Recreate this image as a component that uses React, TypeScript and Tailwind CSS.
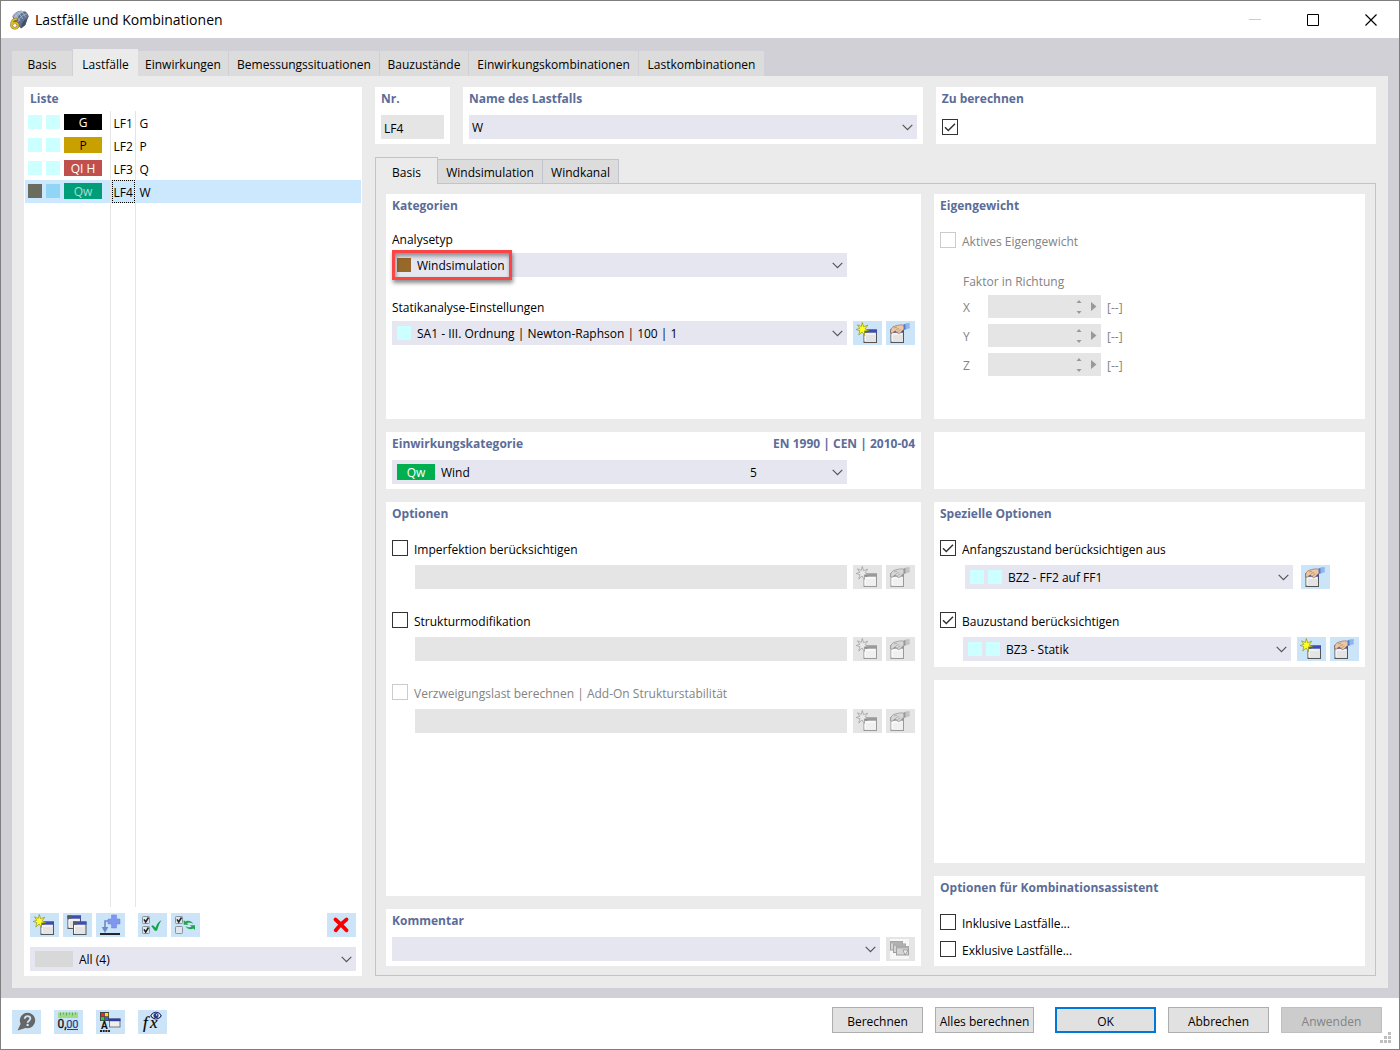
import React from "react";

type Children = { children?: React.ReactNode };

/* ---------- Icons ---------- */

const Glyph: React.FC<Children> = ({ children }) => (
  <svg viewBox="0 0 29 24" width="29" height="24" aria-hidden="true">
    {children}
  </svg>
);

const MiniWindow = ({ x, y, gray = false }: { x: number; y: number; gray?: boolean }) => (
  <g>
    <rect x={x + 0.5} y={y + 0.5} width="12.5" height="12.5" fill={gray ? "#f0f0f0" : "#e4e4e4"} stroke={gray ? "#999" : "#555"} />
    <rect x={x} y={y} width="13.5" height="3.2" fill={gray ? "#999" : "#3f4db0"} />
    <rect x={x} y={y} width="4" height="3.2" fill={gray ? "#888" : "#5a5a62"} />
    <path d={`M${x + 1.5} ${y + 11.5}V${y + 4.5}H${x + 11.5}`} fill="none" stroke="#fff" />
  </g>
);

const NewIcon = ({ gray = false }: { gray?: boolean }) => (
  <Glyph>
    <MiniWindow x={10.5} y={8.5} gray={gray} />
    <path
      d="M9.3 1.500l1.300 4.200 4.200-1.500-2.700 3.600 3.500 1.800-4.200.3.200 4.600-2.500-3.500-3.300 3 1-4.400L3.200 8.500l3.600-1.200L4.500 3.800l3.800 1.700z"
      fill={gray ? "#e8e8e8" : "#ffff1f"}
      stroke={gray ? "#999" : "#8f8f20"}
      strokeWidth=".7"
    />
  </Glyph>
);

const EditIcon = ({ gray = false }: { gray?: boolean }) => (
  <Glyph>
    <MiniWindow x={4.5} y={8.5} gray={gray} />
    <path
      d="M4.600 10.500c0-2.600 1.600-4.600 3.700-5.200 2.600-.9 5.200-1.500 7.800-1.400l2 .5v4.200l-1.900 1c-.8 1.500-1.800 2.500-3.100 2.900-1.100.4-1.900-.4-1.500-1.300-1 .4-1.800-.2-1.700-1.100-1.100.1-2 .4-2.600 1.300-.9 1.300-2.700.600-2.700-.9z"
      fill={gray ? "#d6d6d6" : "#eec7a2"}
      stroke={gray ? "#8f8f8f" : "#8f6f56"}
      strokeWidth=".7"
    />
    <path d="M9.500 9.300c1-1.100 2.200-1.600 3.500-1.600M12 11c.6-1.200 1.400-1.800 2.500-2.100M8 7l3-.9" fill="none" stroke={gray ? "#999" : "#9a7a60"} strokeWidth=".6" />
    <path d="M18.600 3l1.700-.7h3.700l-.5 3.200.6 1.600-2.800.9-2.900.8z" fill={gray ? "#c4c4c4" : "#8fb4ee"} />
    <path d="M17.600 3.500l1.700-.6.300 5.500-1.800.4z" fill={gray ? "#999" : "#4f7cc8"} />
  </Glyph>
);

const CopyIcon = () => (
  <Glyph>
    <MiniWindow x={4.5} y={2.5} />
    <MiniWindow x={10} y={8.5} />
  </Glyph>
);

const InsertIcon = () => (
  <Glyph>
    <path d="M15.5 2h5v4H24v5h-3.500v4h-5v-4h-3.500V6h3.500z" fill="#7f97ee" stroke="#6a80d8" strokeWidth=".5" />
    <path d="M12 8H9v7" fill="none" stroke="#6a8cc8" strokeWidth="1.6" />
    <path d="M5.700 14h6.600L9 20z" fill="#6a8cc8" />
    <path d="M4 21h20" stroke="#111" strokeWidth="1.800" />
  </Glyph>
);

const TickBox = ({ y, ticked }: { y: number; ticked: boolean }) => (
  <g>
    <rect x="4.500" y={y} width="7" height="7" rx=".8" fill="#dfe7ee" stroke="#8a949c" />
    {ticked && <path d={`M6 ${y + 2.8}l1.700 2.700 2.800-4.500`} fill="none" stroke="#222" strokeWidth="1.500" />}
  </g>
);

const CheckAllIcon = () => (
  <Glyph>
    <TickBox y={3.500} ticked />
    <TickBox y={13.500} ticked />
    <path d="M13.200 13l1.800-.8 2.600 2.500c1-3.500 2.800-6 5.900-7.700-2 3.200-3.300 6.500-4.500 10.800h-2.200z" fill="#14a548" />
  </Glyph>
);

const InvertIcon = () => (
  <Glyph>
    <TickBox y={3.500} ticked />
    <TickBox y={13.500} ticked={false} />
    <path d="M12.700 7v4.700h5L16 10.300c1.900-.8 4.500-.6 6.300.8-1.800-3.400-5.700-4-8-2.500z" fill="#23a455" />
    <path d="M24 17v-4.700h-5l1.700 1.400c-1.900.8-4.500.6-6.300-.8 1.800 3.400 5.700 4 8 2.500z" fill="#23a455" />
  </Glyph>
);

const DeleteIcon = () => (
  <Glyph>
    <path d="M8.500 6.500c3.500 3 7 6.500 11 10.800M19.500 6.500c-4 3-8 6.800-10.800 10.800" fill="none" stroke="#f80000" strokeWidth="3.800" strokeLinecap="round" />
  </Glyph>
);

const HelpIcon = () => (
  <Glyph>
    <circle cx="15.500" cy="10.500" r="7.700" fill="#666" />
    <path d="M9 13L5.500 20.500l8-2.500z" fill="#666" />
    <path d="M12.800 8.700c0-3.500 5.700-3.300 5.500 0-.1 2-2.700 2-2.700 4.100" fill="none" stroke="#cde4f8" strokeWidth="1.900" />
    <circle cx="15.600" cy="15" r="1.200" fill="#cde4f8" />
  </Glyph>
);

const UnitsIcon = () => (
  <Glyph>
    <rect x="4" y="2.500" width="20" height="5.500" fill="#9cdc86" />
    <path d="M6.500 2.500v3M9.500 2.500v2M12.500 2.500v3M15.500 2.500v2M18.500 2.500v3M21.500 2.500v2" stroke="#5aa04c" strokeWidth=".8" />
    <text x="3.500" y="18" fontSize="12" fontFamily="Roboto, sans-serif" fill="#111" stroke="#111" strokeWidth=".3">0,</text>
    <text x="12.200" y="18" fontSize="11" fontFamily="Roboto, sans-serif" fill="#27408b" stroke="#27408b" strokeWidth=".2">00</text>
    <path d="M13 19.500h11" stroke="#27408b" />
  </Glyph>
);

const DisplayIcon = () => (
  <Glyph>
    <rect x="4" y="2" width="9" height="9" fill="#444" />
    <path d="M5 3h3.300v3.300H5z" fill="#f22" />
    <path d="M8.900 3h3.300v3.300H8.900z" fill="#ffe600" />
    <path d="M5 6.900h3.300v3.300H5z" fill="#1fd32c" />
    <path d="M8.900 6.900h3.300v3.300H8.900z" fill="#3a58ff" />
    <text x="5" y="19" fontSize="10" fontWeight="bold" fontFamily="Roboto, sans-serif" fill="#111">A</text>
    <path d="M4 21h10" stroke="#222" strokeWidth="2" strokeDasharray="2 .7" />
    <rect x="13.500" y="9" width="10.500" height="8" fill="#eee" stroke="#777" />
    <rect x="13" y="8.500" width="11.500" height="2.700" fill="#2e3f9e" />
  </Glyph>
);

const FormulaIcon = () => (
  <Glyph>
    <text x="5" y="18" fontSize="17" fontStyle="italic" fontFamily="'Liberation Serif', serif" stroke="#111" strokeWidth=".2">f</text>
    <text x="12" y="18" fontSize="17" fontStyle="italic" fontFamily="'Liberation Serif', serif" stroke="#111" strokeWidth=".2">x</text>
    <path d="M12.800 5.800c2.500-4.700 7.900-4.700 10.400 0-2.500 4.200-7.900 4.200-10.400 0z" fill="#fff" stroke="#222a6a" strokeWidth="1.100" />
    <circle cx="18" cy="5.600" r="2.600" fill="#263a8c" />
    <circle cx="18.600" cy="4.900" r=".8" fill="#cde4f8" />
  </Glyph>
);

const CommentsIcon = () => (
  <Glyph>
    <rect x="4" y="2" width="19" height="20" fill="#f7f7f7" />
    {[0, 1, 2].map((i) => (
      <g key={i}>
        <rect x={4.5 + i * 3} y={4.5 + i * 2.5} width="12" height="8.500" fill="#d4d4d4" stroke="#a0a0a0" />
        <rect x={4.5 + i * 3} y={4.5 + i * 2.5} width="12" height="2" fill="#b0b0b0" />
      </g>
    ))}
    <path d="M17 13h5l-3 5z" fill="#f2f2f2" stroke="#888" strokeWidth=".7" />
  </Glyph>
);

const AppIcon = () => (
  <svg viewBox="0 0 20 20" width="20" height="20" aria-hidden="true">
    <path d="M3.500 6.500C5 3.500 8.500 1 12 .8l4.500.7c1.600 1.300 2.800 3 3.300 5l-1.300 2.300-2 6.200-4.500 3.500L5 12z" fill="#5f7191" />
    <path d="M3.500 6.500C5 3.500 8.500 1 12 .8l4.500.7c-4 1-7.500 4-8.700 8z" fill="#93a6c4" />
    <path d="M16.500 9.500l3-3-1.300 2.500-2 6-4 3.200c-.3-3.700 1.600-7 4.300-8.700z" fill="#414e68" />
    <path d="M6 4l5 7M9 2l5 7M12.500 1l4.500 6.500M5 8.500C7 4.500 11 2 14.500 1.500M9 12c1.500-4.500 5-7.500 9-8" fill="none" stroke="#c3cfe0" strokeWidth=".6" />
    <path d="M7.800 9.300C4.500 8.600 2.300 11.500 2.500 15c.3 4.300 6.500 4.300 6.500.4 0-3.200-4.800-3.500-6.200-.6" fill="none" stroke="#8a7216" strokeWidth="2.600" />
    <path d="M7.800 9.300C4.500 8.600 2.300 11.500 2.500 15c.3 4.300 6.500 4.300 6.500.4 0-3.200-4.800-3.500-6.200-.6" fill="none" stroke="#e0b92c" strokeWidth="1.700" />
  </svg>
);

const Chevron = () => (
  <svg className="pointer-events-none -ml-4 mr-1 shrink-0" width="11" height="7" viewBox="0 0 11 7" aria-hidden="true">
    <path d="M.7.8l4.800 4.800L10.300.8" fill="none" stroke="#555" strokeWidth="1.200" />
  </svg>
);

/* ---------- Controls ---------- */

const Panel = ({ title, className = "", children }: Children & { title?: string; className?: string }) => (
  <section className={`bg-white px-1.5 ${className}`}>
    {title && <h2 className="h-6 text-xs leading-6 font-bold text-[#5c6c98]">{title}</h2>}
    {children}
  </section>
);

const IconButton = ({ label, disabled = false, children }: Children & { label: string; disabled?: boolean }) => (
  <button
    type="button"
    aria-label={label}
    disabled={disabled}
    className="h-6 w-[29px] shrink-0 bg-[#cce4f7] disabled:bg-[#e5e5e5]"
  >
    {children}
  </button>
);

type ComboProps = Children & { label: string; id?: string; value: string; className?: string; pad?: string; count?: string };

const Combo = ({ label, id, value, className = "", pad = "px-1.5", count, children }: ComboProps) => (
  <div className={`relative flex h-6 min-w-0 items-center bg-[#e6e6f1] ${className}`}>
    {children}
    <select id={id} aria-label={label} className={`h-6 min-w-0 flex-1 appearance-none bg-transparent pt-0.5 ${pad} outline-none`}>
      <option>{value}</option>
    </select>
    {count && <span className="pointer-events-none w-[98px] pt-0.5">{count}</span>}
    <Chevron />
  </div>
);

const Swatch = ({ className }: { className: string }) => <span className={`size-3.5 shrink-0 ${className}`} />;

const Badge = ({ text, className }: { text: string; className: string }) => (
  <span className={`h-4 w-[38px] shrink-0 text-center leading-[18px] ${className}`}>{text}</span>
);

type CheckProps = { label: string; checked?: boolean; disabled?: boolean; hideLabel?: boolean };

const Check = ({ label, checked = false, disabled = false, hideLabel = false }: CheckProps) => (
  <label className={`flex h-5 items-center gap-1.5 ${disabled ? "text-[#838383]" : ""}`}>
    <span className="grid size-4 shrink-0">
      <input
        type="checkbox"
        defaultChecked={checked}
        disabled={disabled}
        aria-label={label}
        className="peer col-start-1 row-start-1 size-4 appearance-none border border-[#333] bg-white disabled:border-[#ccc]"
      />
      <svg viewBox="0 0 16 16" className="pointer-events-none invisible col-start-1 row-start-1 size-4 peer-checked:visible">
        <path d="M3 8.200l3.300 3.300 6.700-6.800" fill="none" stroke="#333" strokeWidth="1.500" />
      </svg>
    </span>
    {!hideLabel && <span className="pt-1">{label}</span>}
  </label>
);

const DisabledRow = ({ label }: { label: string }) => (
  <div className="mt-[7px] flex pl-[23px]">
    <input disabled aria-label={label} className="mr-1.5 h-6 min-w-0 flex-1 bg-[#e5e5e5]" />
    <IconButton label="Neu" disabled>
      <NewIcon gray />
    </IconButton>
    <span className="w-1" />
    <IconButton label="Bearbeiten" disabled>
      <EditIcon gray />
    </IconButton>
  </div>
);

const FactorRow = ({ axis }: { axis: string }) => (
  <div className="flex h-[23px] items-center">
    <label htmlFor={`factor-${axis}`} className="w-[25px] pt-0.5">{axis}</label>
    <div className="flex h-[23px] w-[113px] items-center bg-[#e5e5e5]">
      <input id={`factor-${axis}`} disabled className="h-full min-w-0 flex-1" />
      <svg width="25" height="23" viewBox="0 0 25 23" aria-hidden="true">
        <path d="M.500 8L3 5l2.500 3zM.500 16L3 19l2.500-3zM15 7l5.500 4.500L15 16z" fill="#999" />
      </svg>
    </div>
    <span className="pt-0.5 pl-1.5">[--]</span>
  </div>
);

/* ---------- Data ---------- */

const mainTabs = [
  { name: "Basis", width: "w-[61px]" },
  { name: "Lastfälle", width: "w-[65px]", active: true },
  { name: "Einwirkungen", width: "w-[91px]" },
  { name: "Bemessungssituationen", width: "w-[151px]" },
  { name: "Bauzustände", width: "w-[89px]" },
  { name: "Einwirkungskombinationen", width: "w-[170px]" },
  { name: "Lastkombinationen", width: "w-[126px]" },
];

const subTabs = [
  { name: "Basis", width: "w-[63px]", active: true },
  { name: "Windsimulation", width: "w-[105px]" },
  { name: "Windkanal", width: "w-[76px]" },
];

const loadCases = [
  { no: "LF1", name: "G", badge: "G", badgeStyle: "bg-black text-white" },
  { no: "LF2", name: "P", badge: "P", badgeStyle: "bg-[#c8a000] text-black" },
  { no: "LF3", name: "Q", badge: "QI H", badgeStyle: "bg-[#c0504d] text-white" },
  { no: "LF4", name: "W", badge: "Qw", badgeStyle: "bg-[#009e78] text-[#a9dcd6]", selected: true },
];

/* ---------- Sections ---------- */

const TitleBar = () => (
  <header className="flex h-[37px] shrink-0 items-center bg-white pl-2">
    <AppIcon />
    <h1 className="flex-1 pl-1.5 text-sm">Lastfälle und Kombinationen</h1>
    <button type="button" aria-label="Minimieren" className="grid h-full w-[58px] place-items-center">
      <svg width="12" height="12"><path d="M0 5.500h12" stroke="#ccc" /></svg>
    </button>
    <button type="button" aria-label="Maximieren" className="grid h-full w-[58px] place-items-center">
      <svg width="12" height="12"><path d="M.500.500h11v11H.500z" fill="none" stroke="#000" /></svg>
    </button>
    <button type="button" aria-label="Schließen" className="mr-[-1px] grid h-full w-[58px] place-items-center">
      <svg width="12" height="12"><path d="M.500.500l11 11M11.500.500l-11 11" fill="none" stroke="#000" strokeWidth="1.200" /></svg>
    </button>
  </header>
);

const LoadCaseList = () => (
  <Panel title="Liste" className="flex w-[338px] shrink-0 flex-col pb-[5px]">
    <div className="-mx-[5px] flex flex-1 flex-col">
      <table className="w-full flex-1 table-fixed border-collapse">
        <colgroup>
          <col className="w-[85px]" />
          <col className="w-[25px]" />
          <col />
        </colgroup>
        <tbody>
          {loadCases.map((lc) => (
            <tr key={lc.no} className={`h-[23px] ${lc.selected ? "bg-[#cce8ff]" : ""}`}>
              <td className="border-r border-[#e5e5e5] p-0 pb-px pl-[3px]">
                <div className="flex items-center gap-1">
                  <Swatch className={lc.selected ? "bg-[#6a6c5e]" : "bg-[#ccffff]"} />
                  <Swatch className={lc.selected ? "bg-[#90d5f5]" : "bg-[#ccffff]"} />
                  <Badge text={lc.badge} className={lc.badgeStyle} />
                </div>
              </td>
              <td className="border-r border-[#e5e5e5] p-0 pl-px">
                <span className={`block h-[23px] border border-dotted pt-0.5 pl-px leading-5 ${lc.selected ? "border-black" : "border-transparent"}`}>{lc.no}</span>
              </td>
              <td className="p-0 pt-0.5 pl-1">{lc.name}</td>
            </tr>
          ))}
          <tr>
            <td className="border-r border-[#e5e5e5] p-0" />
            <td className="border-r border-[#e5e5e5] p-0" />
            <td className="p-0" />
          </tr>
        </tbody>
      </table>
    </div>
    <div className="mt-1.5 flex gap-1">
      <IconButton label="Neu"><NewIcon /></IconButton>
      <IconButton label="Kopieren"><CopyIcon /></IconButton>
      <IconButton label="Einfügen"><InsertIcon /></IconButton>
      <span className="w-[5px]" />
      <IconButton label="Alle auswählen"><CheckAllIcon /></IconButton>
      <IconButton label="Auswahl umkehren"><InvertIcon /></IconButton>
      <span className="flex-1" />
      <IconButton label="Löschen"><DeleteIcon /></IconButton>
    </div>
    <Combo label="Filter" value="All (4)" className="mt-2.5">
      <span className="ml-[5px] h-4 w-[38px] bg-[#d8d8d8]" />
    </Combo>
  </Panel>
);

const fieldLabel = "mb-1 block h-5 leading-[22px]";

const LeftColumn = () => (
  <div className="flex min-w-0 grow-[535] basis-0 flex-col gap-[13px]">
    <Panel title="Kategorien" className="h-[225px]">
      <label htmlFor="analysis" className={`${fieldLabel} mt-[11px]`}>Analysetyp</label>
      <Combo id="analysis" label="Analysetyp" value="Windsimulation" className="mr-[68px]">
        <Swatch className="ml-[5px] bg-[#96682a]" />
        <span className="pointer-events-none absolute -top-[3px] left-0 h-[30px] w-[120px] border-3 border-[#f94545] shadow-[1px_3px_4px_rgba(0,0,0,0.45),inset_1px_3px_4px_rgba(0,0,0,0.4)]" />
      </Combo>
      <label htmlFor="static" className={`${fieldLabel} mt-5`}>Statikanalyse-Einstellungen</label>
      <div className="flex">
        <Combo id="static" label="Statikanalyse-Einstellungen" value="SA1 - III. Ordnung | Newton-Raphson | 100 | 1" className="mr-1.5 flex-1">
          <Swatch className="ml-[5px] bg-[#ccffff]" />
        </Combo>
        <IconButton label="Neu"><NewIcon /></IconButton>
        <span className="w-1" />
        <IconButton label="Bearbeiten"><EditIcon /></IconButton>
      </div>
    </Panel>

    <Panel className="h-[57px]">
      <div className="flex h-6 justify-between text-xs leading-6 font-bold text-[#5c6c98]">
        <h2>Einwirkungskategorie</h2>
        <span>EN 1990 | CEN | 2010-04</span>
      </div>
      <Combo label="Einwirkungskategorie" value="Wind" count="5" className="mt-1 mr-[68px]">
        <span className="w-[5px]" />
        <Badge text="Qw" className="bg-[#00b050] text-white" />
      </Combo>
    </Panel>

    <Panel title="Optionen" className="min-h-[240px] flex-1">
      <div className="mt-3"><Check label="Imperfektion berücksichtigen" /></div>
      <DisabledRow label="Imperfektion" />
      <div className="mt-[21px]"><Check label="Strukturmodifikation" /></div>
      <DisabledRow label="Strukturmodifikation" />
      <div className="mt-[21px]"><Check label="Verzweigungslast berechnen | Add-On Strukturstabilität" disabled /></div>
      <DisabledRow label="Verzweigungslast" />
    </Panel>

    <Panel title="Kommentar" className="h-[57px]">
      <div className="mt-1 flex gap-1.5">
        <Combo label="Kommentar" value="" className="flex-1" />
        <IconButton label="Kommentare" disabled><CommentsIcon /></IconButton>
      </div>
    </Panel>
  </div>
);

const RightColumn = () => (
  <div className="flex min-w-0 grow-[431] basis-0 flex-col gap-[13px]">
    <Panel title="Eigengewicht" className="h-[225px]">
      <div className="mt-3"><Check label="Aktives Eigengewicht" disabled /></div>
      <div className="mt-[21px] ml-[23px] text-[#838383]">
        <p className={fieldLabel}>Faktor in Richtung</p>
        <div className="flex flex-col gap-1.5">
          <FactorRow axis="X" />
          <FactorRow axis="Y" />
          <FactorRow axis="Z" />
        </div>
      </div>
    </Panel>
    <Panel className="h-[57px]" />
    <Panel title="Spezielle Optionen" className="h-[165px]">
      <div className="mt-3"><Check label="Anfangszustand berücksichtigen aus" checked /></div>
      <div className="mt-[7px] mr-[29px] ml-[25px] flex gap-2">
        <Combo label="Anfangszustand" value="BZ2 - FF2 auf FF1" className="flex-1">
          <Swatch className="mr-1 ml-[5px] bg-[#ccffff]" />
          <Swatch className="bg-[#ccffff]" />
        </Combo>
        <IconButton label="Bearbeiten"><EditIcon /></IconButton>
      </div>
      <div className="mt-[21px]"><Check label="Bauzustand berücksichtigen" checked /></div>
      <div className="mt-[7px] ml-[23px] flex">
        <Combo label="Bauzustand" value="BZ3 - Statik" className="mr-1.5 flex-1">
          <Swatch className="mr-1 ml-[5px] bg-[#ccffff]" />
          <Swatch className="bg-[#ccffff]" />
        </Combo>
        <IconButton label="Neu"><NewIcon /></IconButton>
        <span className="w-1" />
        <IconButton label="Bearbeiten"><EditIcon /></IconButton>
      </div>
    </Panel>
    <Panel className="flex-1" />
    <Panel title="Optionen für Kombinationsassistent" className="h-[90px]">
      <div className="mt-3 flex flex-col gap-[7px]">
        <Check label="Inklusive Lastfälle..." />
        <Check label="Exklusive Lastfälle..." />
      </div>
    </Panel>
  </div>
);

const Details = () => (
  <div className="flex min-w-0 flex-1 flex-col">
    <div className="flex h-[57px] gap-[13px]">
      <Panel title="Nr." className="w-[75px]">
        <input aria-label="Nr." defaultValue="LF4" readOnly className="mt-1 h-6 w-full bg-[#e5e5e5] px-[3px] pt-0.5" />
      </Panel>
      <Panel title="Name des Lastfalls" className="min-w-0 grow-[460] basis-0">
        <Combo label="Name des Lastfalls" value="W" pad="px-[3px]" className="mt-1" />
      </Panel>
      <Panel title="Zu berechnen" className="min-w-0 grow-[440] basis-0">
        <div className="mt-1.5"><Check label="Zu berechnen" checked hideLabel /></div>
      </Panel>
    </div>
    <div role="tablist" className="z-10 mt-[13px] -mb-px flex h-[27px] items-end">
      {subTabs.map((tab) => (
        <button
          key={tab.name}
          type="button"
          role="tab"
          aria-selected={!!tab.active}
          className={`${tab.width} border-[#c3c3cf] ${tab.active ? "h-[27px] border-t border-r border-l bg-[#ebebeb] pt-1" : "h-[25px] border-t border-r border-b bg-[#dcdcdc] pt-0.5"}`}
        >
          {tab.name}
        </button>
      ))}
    </div>
    <div className="flex flex-1 gap-[13px] border border-[#c3c3cf] px-2.5 pt-2.5 pb-[9px]">
      <LeftColumn />
      <RightColumn />
    </div>
  </div>
);

const dialogButton = "h-[26px] border border-[#adadad] bg-[#e1e1e1] pt-1 whitespace-nowrap";

const Footer = () => (
  <footer className="relative flex h-[51px] shrink-0 items-center bg-white pr-[17px] pl-[11px]">
    <div className="flex gap-[13px] pb-[3px]">
      <IconButton label="Hilfe"><HelpIcon /></IconButton>
      <IconButton label="Einheiten"><UnitsIcon /></IconButton>
      <IconButton label="Anzeige"><DisplayIcon /></IconButton>
      <IconButton label="Formeln"><FormulaIcon /></IconButton>
    </div>
    <div className="ml-auto flex gap-3 pb-[7px]">
      <button type="button" className={`${dialogButton} w-[91px]`}>Berechnen</button>
      <button type="button" className={`${dialogButton} mr-[9px] w-[99px]`}>Alles berechnen</button>
      <button type="button" className="h-[26px] w-[101px] border-2 border-[#0078d7] bg-[#e1e1e1] pt-1">OK</button>
      <button type="button" className={`${dialogButton} w-[101px]`}>Abbrechen</button>
      <button type="button" disabled className="h-[26px] w-[101px] border border-[#bfbfbf] bg-[#cccccc] pt-1 text-[#838383]">Anwenden</button>
    </div>
    <svg className="absolute right-2 bottom-1.5" width="11" height="11" viewBox="0 0 11 11" aria-hidden="true">
      <path d="M8 0h3v3H8zM4 4h3v3H4zM8 4h3v3H8zM0 8h3v3H0zM4 8h3v3H4zM8 8h3v3H8z" fill="#bfbfbf" />
    </svg>
  </footer>
);

const App: React.FC = () => {
  return (
    <div className="flex min-h-screen flex-col border border-[#7f7f7f] bg-[#d1d0d6] font-['Open_Sans','Noto_Sans',sans-serif] text-xs text-black">
      <TitleBar />
      <main className="flex flex-1 flex-col px-[11px] pt-[11px] pb-2.5">
        <div role="tablist" className="flex h-[27px] items-end">
          {mainTabs.map((tab) => (
            <button
              key={tab.name}
              type="button"
              role="tab"
              aria-selected={!!tab.active}
              className={`${tab.width} whitespace-nowrap ${tab.active ? "h-[27px] bg-[#ebebeb] pt-1" : "h-[25px] border-r border-[#d1d0d6] bg-[#dcdcdc] pt-0.5"}`}
            >
              {tab.name}
            </button>
          ))}
        </div>
        <div className="flex flex-1 gap-[13px] bg-[#ebebeb] px-3 pt-[11px] pb-3">
          <LoadCaseList />
          <Details />
        </div>
      </main>
      <Footer />
    </div>
  );
};

export default App;
